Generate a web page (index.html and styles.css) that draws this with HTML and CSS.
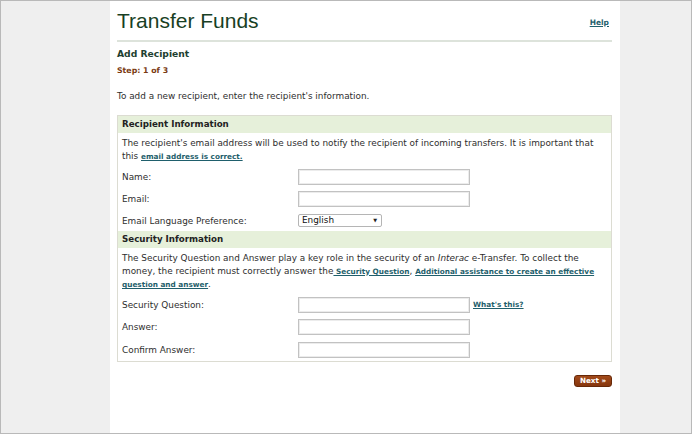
FILE: index.html
```html
<!DOCTYPE html>
<html lang="en">
<head>
<meta charset="utf-8">
<title>Transfer Funds</title>
<link rel="stylesheet" href="styles.css">
</head>
<body>
<div class="frame">
  <main class="panel">
    <header class="head">
      <h1 class="title">Transfer Funds</h1>
      <a class="link help" href="#">Help</a>
    </header>
    <hr class="rule">
    <h2 class="subtitle">Add Recipient</h2>
    <p class="step">Step: 1 of 3</p>
    <p class="intro">To add a new recipient, enter the recipient's information.</p>

    <section class="box">
      <h3 class="band">Recipient Information</h3>
      <p class="para">The recipient's email address will be used to notify the recipient of incoming transfers. It is important that this <a class="link" href="#">email address is correct.</a></p>
      <div class="row"><label class="lbl">Name:</label><input class="field" type="text"></div>
      <div class="row"><label class="lbl">Email:</label><input class="field" type="text"></div>
      <div class="row row-lang"><label class="lbl">Email Language Preference:</label>
        <span class="selwrap"><select class="sel"><option>English</option><option>French</option></select><span class="arrow">▼</span></span>
      </div>

      <h3 class="band">Security Information</h3>
      <p class="para">The Security Question and Answer play a key role in the security of an <i>Interac</i> e-Transfer. To collect the money, the recipient must correctly answer the<a class="link" href="#"> Security Question</a>, <a class="link" href="#">Additional assistance to create an effective question and answer</a>.</p>
      <div class="row"><label class="lbl">Security Question:</label><input class="field" type="text"><a class="link whats" href="#">What's this?</a></div>
      <div class="row"><label class="lbl">Answer:</label><input class="field" type="text"></div>
      <div class="row"><label class="lbl">Confirm Answer:</label><input class="field" type="text"></div>
    </section>

    <div class="actions">
      <button class="next" type="button">Next »</button>
    </div>
  </main>
</div>
</body>
</html>
```

FILE: styles.css
```css
html, body {
  margin: 0;
  padding: 0;
}

body {
  font-family: Verdana, "DejaVu Sans", sans-serif;
  color: #2e2e2e;
}

.frame {
  box-sizing: border-box;
  width: 692px;
  height: 434px;
  border: 1px solid #b9b9b9;
  background: #efefef;
  display: flex;
}

.panel {
  margin-left: 109px;
  width: 510px;
  box-sizing: border-box;
  padding: 0 8px 0 7px;
  background: #ffffff;
}

.head {
  display: flex;
  justify-content: space-between;
  align-items: flex-start;
  padding-top: 8px;
}

.title {
  margin: 0;
  font-family: Arial, "Liberation Sans", sans-serif;
  font-weight: normal;
  font-size: 21px;
  line-height: 24px;
  color: #183f24;
}

.link {
  color: #1f5f6c;
  font-weight: bold;
  font-size: 7.3px;
  text-decoration: underline;
}

.help {
  margin-top: 9px;
  margin-right: 3px;
  font-size: 7.5px;
  line-height: 10px;
}

.rule {
  margin: 7px 0 0 0;
  border: 0;
  height: 2px;
  background: #dde3db;
}

.subtitle {
  margin: 6px 0 0 0;
  font-size: 9.2px;
  line-height: 12px;
  font-weight: bold;
  color: #1e4030;
}

.step {
  margin: 5px 0 0 0;
  font-size: 7.8px;
  line-height: 12px;
  font-weight: bold;
  color: #7a3a12;
}

.intro {
  margin: 13px 0 0 0;
  font-size: 8.9px;
  line-height: 12px;
}

.box {
  margin-top: 13px;
  border: 1px solid #dcdcd2;
}

.band {
  margin: 0;
  height: 17px;
  padding-left: 4px;
  background: #e6f0da;
  font-size: 8.7px;
  line-height: 17px;
  font-weight: bold;
  color: #222222;
}

.para {
  margin: 0;
  padding: 4px 11px 0 4px;
  font-size: 8.9px;
  line-height: 13.3px;
}

.para i {
  font-style: italic;
}

.band + .para + .row {
  margin-top: 2px;
}

.row {
  display: flex;
  align-items: center;
  height: 22.5px;
  padding-left: 4px;
}

.row-lang {
  height: 20px;
}

.lbl {
  width: 176px;
  font-size: 8.9px;
}

.field {
  box-sizing: border-box;
  width: 172px;
  height: 16px;
  margin: 0;
  border: 1px solid #c2c2c2;
  box-shadow: inset 0 0 0 1px #ececec;
  background: #ffffff;
  padding: 0 2px;
}

.whats {
  margin-left: 3px;
}

.selwrap {
  position: relative;
  display: flex;
}

.sel {
  appearance: none;
  -webkit-appearance: none;
  box-sizing: border-box;
  width: 84px;
  height: 13px;
  margin: 0;
  padding: 0 0 0 3px;
  border: 1px solid #b5b5b5;
  border-radius: 2px;
  background: #ffffff;
  font-family: Verdana, "DejaVu Sans", sans-serif;
  font-size: 8.9px;
  line-height: 11px;
  color: #111111;
}

.arrow {
  position: absolute;
  right: 5px;
  top: 4px;
  font-size: 5px;
  line-height: 5px;
  color: #222222;
  pointer-events: none;
}

.actions {
  display: flex;
  justify-content: flex-end;
  margin-top: 13.5px;
}

.next {
  box-sizing: border-box;
  width: 38px;
  height: 12px;
  padding: 0;
  border: 1px solid #672808;
  border-radius: 3px;
  background: linear-gradient(#a24a1a, #86360e);
  color: #ffffff;
  font-family: Verdana, "DejaVu Sans", sans-serif;
  font-weight: bold;
  font-size: 7.2px;
  line-height: 10px;
}
```
